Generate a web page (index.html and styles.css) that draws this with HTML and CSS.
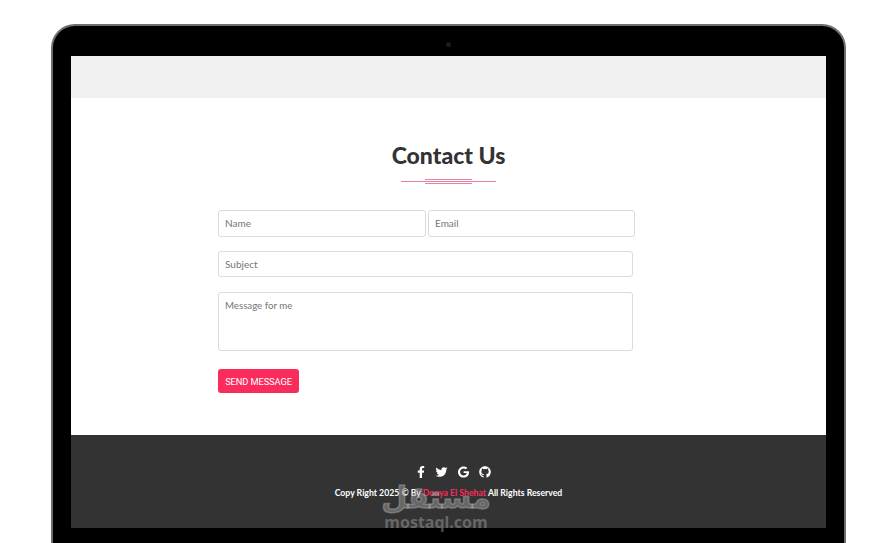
FILE: index.html
```html
<!DOCTYPE html>
<html lang="en">
<head>
    <meta charset="UTF-8">
    <meta name="viewport" content="width=device-width, initial-scale=1.0">
    <title>Contact Us</title>
    <link rel="stylesheet" href="styles.css">
</head>
<body>
    <div class="laptop">
        <div class="camera-bar"><span class="camera"></span></div>
        <div class="screen">
            <div class="top-strip"></div>
            <section class="contact">
                <h1>Contact Us</h1>
                <div class="divider"><span></span></div>
                <form class="contact-form">
                    <div class="form-row">
                        <input type="text" class="field field-name" placeholder="Name">
                        <input type="text" class="field field-email" placeholder="Email">
                    </div>
                    <input type="text" class="field field-subject" placeholder="Subject">
                    <textarea class="field field-message" placeholder="Message for me"></textarea>
                    <button type="button" class="send-btn">SEND MESSAGE</button>
                </form>
            </section>
            <footer class="footer">
                <div class="socials">
                    <svg class="icon-f" viewBox="0 0 320 512"><path d="M279.14 288l14.22-92.66h-88.91v-60.13c0-25.35 12.42-50.06 52.24-50.06h40.42V6.26S260.43 0 225.36 0c-73.22 0-121.08 44.38-121.08 124.72v70.62H22.89V288h81.39v224h100.17V288z"/></svg>
                    <svg class="icon-t" viewBox="0 0 512 512"><path d="M459.37 151.716c.325 4.548.325 9.097.325 13.645 0 138.72-105.583 298.558-298.558 298.558-59.452 0-114.68-17.219-161.137-47.106 8.447.974 16.568 1.299 25.34 1.299 49.055 0 94.213-16.568 130.274-44.832-46.132-.975-84.792-31.188-98.112-72.772 6.498.974 12.995 1.624 19.818 1.624 9.421 0 18.843-1.3 27.614-3.573-48.081-9.747-84.143-51.98-84.143-102.985v-1.299c13.969 7.797 30.214 12.67 47.431 13.319-28.264-18.843-46.781-51.005-46.781-87.391 0-19.492 5.197-37.36 14.294-52.954 51.655 63.675 129.3 105.258 216.365 109.807-1.624-7.797-2.599-15.918-2.599-24.04 0-57.828 46.782-104.934 104.934-104.934 30.213 0 57.502 12.67 76.67 33.137 23.715-4.548 46.456-13.32 66.599-25.34-7.798 24.366-24.366 44.833-46.132 57.827 21.117-2.273 41.584-8.122 60.426-16.243-14.292 20.791-32.161 39.308-52.628 54.253z"/></svg>
                    <svg class="icon-g" viewBox="0 0 488 512"><path d="M488 261.8C488 403.3 391.1 504 248 504 110.8 504 0 393.2 0 256S110.8 8 248 8c66.8 0 123 24.5 166.3 64.9l-67.5 64.9C258.5 52.6 94.3 116.6 94.3 256c0 86.5 69.1 156.6 153.7 156.6 98.2 0 135-70.4 140.8-106.9H248v-85.3h236.1c2.3 12.7 3.9 24.9 3.9 41.4z"/></svg>
                    <svg class="icon-h" viewBox="0 0 496 512"><path d="M244.8 8C106.1 8 0 113.3 0 252c0 110.9 69.8 205.8 169.5 239.2 12.8 2.3 17.3-5.6 17.3-12.1 0-6.2-.3-40.4-.3-61.4 0 0-70 15-84.7-29.8 0 0-11.4-29.1-27.8-36.6 0 0-22.9-15.7 1.6-15.4 0 0 24.9 2 38.6 25.8 21.9 38.6 58.6 27.5 72.9 20.9 2.3-16 8.8-27.1 16-33.7-55.9-6.2-112.3-14.3-112.3-110.5 0-27.5 7.6-41.3 23.6-58.9-2.6-6.5-11.1-33.3 2.6-67.9 20.9-6.5 69 27 69 27 20-5.6 41.5-8.5 62.8-8.5s42.8 2.9 62.8 8.5c0 0 48.1-33.6 69-27 13.7 34.7 5.2 61.4 2.6 67.9 16 17.7 25.8 31.5 25.8 58.9 0 96.5-58.9 104.2-114.8 110.5 9.2 7.9 17 22.9 17 46.4 0 33.7-.3 75.4-.3 83.6 0 6.5 4.6 14.4 17.3 12.1C428.2 457.8 496 362.9 496 252 496 113.3 383.5 8 244.8 8z"/></svg>
                </div>
                <p class="copyright">Copy Right 2025 © By <span class="author">Donya El Shehat</span> All Rights Reserved</p>
            </footer>
        </div>
    </div>
    <div class="watermark">
        <div class="watermark-ar" lang="ar" dir="rtl">مستقل</div>
        <div class="watermark-en">mostaql.com</div>
    </div>
</body>
</html>
```

FILE: styles.css
```css
html, body {
    height: 543px;
}
body {
    margin: 0;
    overflow: hidden;
    background: #fff;
    font-family: Lato, Arial, sans-serif;
    position: relative;
}
.laptop {
    width: 795px;
    height: 519px;
    margin: 24px 0 0 51px;
    box-sizing: border-box;
    background: #000;
    border: 2px solid #6e6e6e;
    border-bottom: none;
    border-radius: 24px 24px 0 0;
    padding: 0 18px;
}
.camera-bar {
    height: 30px;
    display: flex;
    align-items: center;
    justify-content: center;
    padding-top: 6px;
    box-sizing: border-box;
}
.camera {
    width: 5px;
    height: 5px;
    border-radius: 50%;
    background: #1c1c1c;
}
.screen {
    width: 755px;
    height: 472px;
    display: flex;
    flex-direction: column;
    background: #fff;
}
.top-strip {
    height: 42px;
    background: #f0f0f0;
}
.contact {
    height: 337px;
    box-sizing: border-box;
    padding-top: 42px;
}
.contact h1 {
    margin: 0;
    font-size: 23px;
    line-height: 30px;
    font-weight: 900;
    color: #333;
    text-align: center;
}
.divider {
    position: relative;
    width: 95px;
    height: 1px;
    margin: 11px auto 0;
    background: #e97f9b;
}
.divider span {
    position: absolute;
    left: 24px;
    top: -2px;
    width: 47px;
    height: 3px;
    border-top: 1px solid #e97f9b;
    border-bottom: 1px solid #e97f9b;
}
.contact-form {
    margin: 28px 0 0 147px;
    width: 417px;
    display: flex;
    flex-direction: column;
    align-items: flex-start;
}
.form-row {
    display: flex;
    gap: 2px;
    margin-bottom: 14px;
}
.field {
    box-sizing: border-box;
    border: 1px solid #dadada;
    border-radius: 3px;
    padding: 0 6px;
    font-family: Lato, Arial, sans-serif;
    font-size: 10px;
    color: #555;
    background: #fff;
    outline: none;
}
.field::placeholder {
    color: #757575;
    opacity: 1;
}
.field-name {
    width: 208px;
    height: 27px;
    padding-bottom: 2px;
}
.field-email {
    width: 207px;
    height: 27px;
    padding-bottom: 2px;
}
.field-subject {
    width: 415px;
    height: 26px;
    margin-bottom: 15px;
}
.field-message {
    width: 415px;
    height: 59px;
    padding-top: 6px;
    font-size: 9.7px;
    resize: none;
    display: block;
    margin-bottom: 18px;
}
.send-btn {
    width: 81px;
    height: 24px;
    padding: 0;
    border: none;
    border-radius: 3px;
    background: #f92c5b;
    color: #fff;
    font-family: Roboto, Arial, sans-serif;
    font-size: 9.3px;
    letter-spacing: -0.1px;
    cursor: pointer;
}
.footer {
    height: 93px;
    background: #333;
    box-sizing: border-box;
    padding-top: 31px;
}
.socials {
    display: flex;
    justify-content: center;
    align-items: center;
    gap: 10px;
    height: 12px;
    margin-left: 10px;
    fill: #fff;
}
.socials svg {
    display: block;
    height: 12px;
}
.icon-f { width: 8px; }
.icon-t { width: 13px; }
.icon-g { width: 11px; }
.icon-h { width: 12px; }
.copyright {
    margin: 9px 0 0;
    color: #fff;
    text-align: center;
    font-family: Lato, Arial, sans-serif;
    font-weight: 700;
    font-size: 8.7px;
    line-height: 12px;
}
.author {
    color: #f92c5b;
}
.watermark {
    position: absolute;
    left: 361px;
    top: 481px;
    width: 176px;
    margin-left: -13px;
    text-align: center;
    color: rgba(170, 170, 170, 0.45);
    font-weight: 700;
}
.watermark-ar {
    font-family: "DejaVu Sans", sans-serif;
    font-size: 30px;
    line-height: 33px;
    -webkit-text-stroke: 1.5px rgba(170, 170, 170, 0.45);
}
.watermark-en {
    margin-top: -2px;
    font-family: "Noto Sans", sans-serif;
    font-size: 16px;
    line-height: 20px;
}
```
